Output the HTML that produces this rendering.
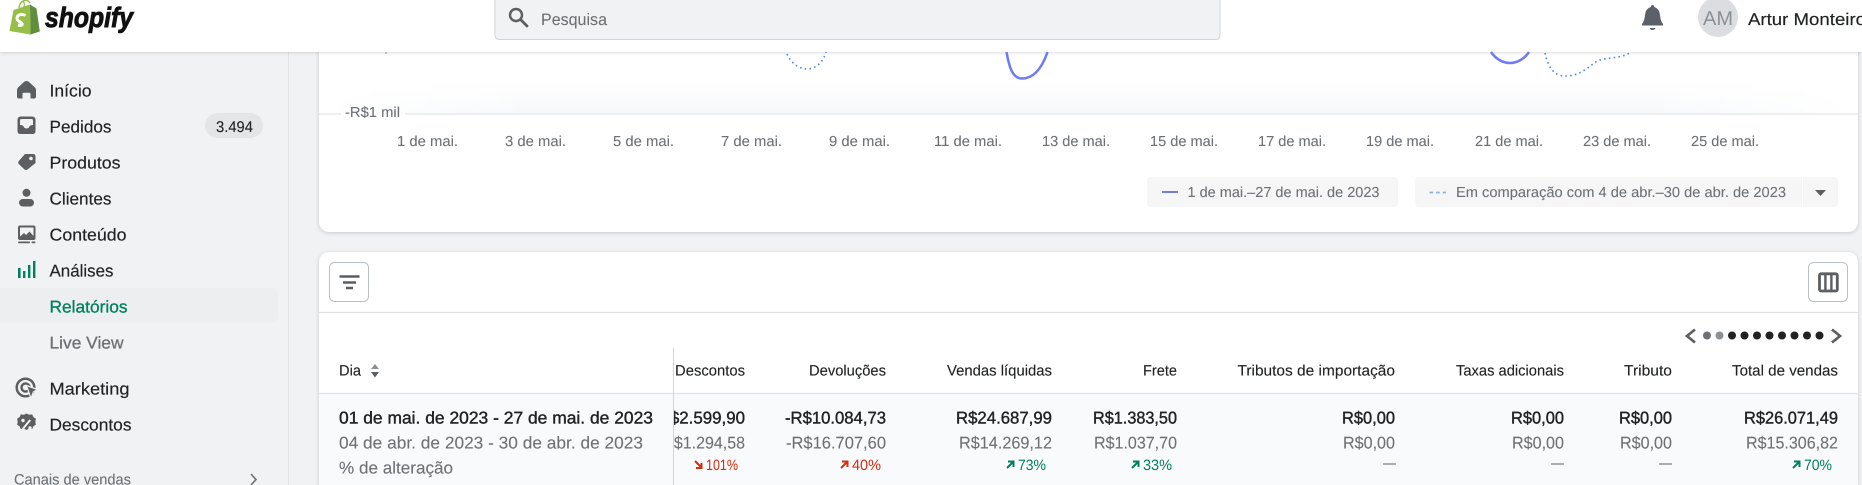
<!DOCTYPE html>
<html lang="pt"><head><meta charset="utf-8"><title>Shopify</title>
<style>
html,body{margin:0;padding:0;width:1862px;height:485px;overflow:hidden;background:#f1f2f4}
#root{position:relative;width:1862px;height:485px;overflow:hidden;background:#f1f2f4}
#top{position:absolute;left:0;top:0;width:1862px;height:52px;background:#fff;box-shadow:0 1px 3px rgba(0,0,0,.14);z-index:3}
#side{position:absolute;left:288px;top:0;width:1px;height:485px;background:#e1e3e5}
.card{position:absolute;left:319px;width:1539px;background:#fff;border-radius:10px;box-shadow:0 1px 4px rgba(23,24,24,.18)}
#c1{top:20px;height:212px}
#c2{top:252px;height:233px;border-radius:10px 10px 0 0}
#grad{position:absolute;left:319px;top:84px;width:1539px;height:30px;background:linear-gradient(#fff,#f6f8fa);-webkit-mask-image:linear-gradient(90deg,transparent,#000 14%,#000 86%,transparent);mask-image:linear-gradient(90deg,transparent,#000 14%,#000 86%,transparent)}
#rowbg{position:absolute;left:319px;top:394px;width:1539px;height:91px;background:#f9fafb}
svg{position:absolute;left:0;top:0;z-index:5;display:block;overflow:hidden}
text{font-family:"Liberation Sans",sans-serif;font-size:17px;fill:#202223;text-rendering:geometricPrecision}
.n{stroke:#202223;stroke-width:.15}
.s{font-size:15px;stroke:#202223;stroke-width:.12}
.g{fill:#6d7175;stroke:#6d7175;stroke-width:.1}
.b{stroke:#202223;stroke-width:.4}
.l{font-size:14.5px;fill:#6d7175;stroke:#6d7175;stroke-width:.1}
.r{font-size:15px;fill:#d72c0d}
.v{font-size:15px;fill:#008060}
</style></head><body>
<div id="root">
<div id="side"></div>
<div id="c1" class="card"></div>
<div id="grad"></div>
<div id="c2" class="card"></div>
<div id="rowbg"></div>
<div id="top"></div>
<svg width="1862" height="485" viewBox="0 0 1862 485" xmlns="http://www.w3.org/2000/svg">
<!-- logo -->
<path d="M19 8 Q20 1 25 0.500 Q28 0 30 3" fill="none" stroke="#95bf47" stroke-width="1.500"/>
<path d="M24 7 Q25 3 23 1" fill="none" stroke="#95bf47" stroke-width="1.200"/>
<path d="M9.500 31 L13.500 10 L30 4.500 L30.500 34.500 Z" fill="#95bf47"/>
<path d="M30 4.500 L33 6.500 L36.500 8.500 L39.800 31.500 L30.500 34.500 Z" fill="#5e8e3e"/>
<path d="M25.500 15.500 Q23 14 20.500 14.500 Q16.800 15.500 17 18.500 Q17.200 20.500 20 22 Q22.500 23.300 22.200 24.500 Q21.500 26 18 25" fill="none" stroke="#fff" stroke-width="3"/>
<text x="45" y="27" textLength="88" lengthAdjust="spacingAndGlyphs" style="font-size:28px;font-weight:bold;font-style:italic;fill:#111;stroke:#111;stroke-width:.9">shopify</text>
<!-- search -->
<path d="M495 -3 H1220 V35 Q1220 39.500 1215.500 39.500 H499.500 Q495 39.500 495 35 Z" fill="#f1f2f4" stroke="#d2d5d8"/>
<circle cx="516" cy="15" r="6" fill="none" stroke="#5c5f62" stroke-width="2.400"/>
<path d="M520.500 19.500 L527 26" stroke="#5c5f62" stroke-width="2.800" stroke-linecap="round"/>
<text x="541" y="25" textLength="66" lengthAdjust="spacingAndGlyphs" class="g" style="font-size:16.500px">Pesquisa</text>
<!-- bell -->
<path d="M1652.500 5 q1.500 0 1.800 2 q5 1.500 5.700 8 q.5 6 3 9 v1.500 h-21 v-1.500 q2.500-3 3-9 q.7-6.500 5.700-8 q.3-2 1.800-2z" fill="#5c6069"/>
<path d="M1649.500 28 h6 q-1 2-3 2 t-3-2z" fill="#5c6069"/>
<!-- avatar -->
<circle cx="1718" cy="17" r="20" fill="#dbdde1"/>
<text x="1703" y="25" textLength="30" lengthAdjust="spacingAndGlyphs" style="font-size:20px;fill:#8c9196">AM</text>
<text x="1748" y="25" textLength="118" lengthAdjust="spacingAndGlyphs" class="n">Artur Monteiro</text>

<!-- nav icons -->
<g fill="#5c5f62">
<path d="M26.500 81 Q28 81 29 82 L35 87.500 Q36 88.500 36 90 V96.500 Q36 98.500 34 98.500 H30.500 V94 Q30.500 92.800 29 92.800 H24 Q22.500 92.800 22.500 94 V98.500 H19 Q17 98.500 17 96.500 V90 Q17 88.500 18 87.500 L24 82 Q25 81 26.500 81 Z"/>
<path d="M21 116.500 H32 Q35.500 116.500 35.500 120 V131 Q35.500 134 32.500 134 H20.500 Q17.500 134 17.500 131 V120 Q17.500 116.500 21 116.500 Z"/>
<path d="M21.500 119 H31.500 Q33 119 33 120.500 V125 Q29.500 125 29 127.500 Q26.500 129.500 24 127.500 Q23.500 125 20 125 V120.500 Q20 119 21.500 119 Z" fill="#f1f2f4"/>
<path d="M25 154 H33 Q35.500 154 35.500 156.500 V163 L27.500 169.500 Q26 170.500 24.500 169.500 L18.800 164 Q17.500 162.500 18.800 161 Z"/>
<circle cx="31" cy="158.500" r="1.800" fill="#f1f2f4"/>
<circle cx="26.500" cy="192.800" r="4"/>
<rect x="19" y="199" width="15" height="7.500" rx="3.700"/>
<rect x="18" y="225.500" width="17.500" height="14.500" rx="2"/>
<path d="M20 227.500 H33.500 V236 L29.500 231.500 L26 235 L24 233 L20 236.500 Z" fill="#f1f2f4"/>
<rect x="18" y="241.500" width="12" height="1.800" rx=".9"/>
<rect x="31.500" y="241.500" width="4" height="1.800" rx=".9"/>
</g>
<g fill="none" stroke="#5c5f62" stroke-width="2.500">
<circle cx="25.500" cy="387.500" r="8.800"/>
<circle cx="25.500" cy="387.500" r="4"/>
</g>
<path d="M26.500 385.500 L37.500 389.500 L33.300 392 L31 398.500 Z" fill="#5c5f62" stroke="#f1f2f4" stroke-width="1.200"/>
<path d="M26.500 413.500 l2.700 1.200 3 -.3 1.200 2.700 2.500 1.700 -.6 2.900 .6 2.900 -2.500 1.700 -1.200 2.700 -3 -.3 -2.700 1.200 -2.700 -1.200 -3 .3 -1.200 -2.700 -2.500 -1.700 .6 -2.900 -.6 -2.900 2.500 -1.700 1.200 -2.700 3 .3 z" fill="#5c5f62"/>
<path d="M22.800 429 L30.200 420" stroke="#f1f2f4" stroke-width="2"/>
<circle cx="23" cy="420.500" r="1.700" fill="#f1f2f4"/><circle cx="30" cy="428" r="1.700" fill="#f1f2f4"/>
<g fill="#008060">
<rect x="18" y="268" width="2.600" height="10"/><rect x="23" y="271" width="2.400" height="7"/>
<rect x="28" y="265" width="2.400" height="13"/><rect x="33" y="261" width="2.400" height="17"/>
</g>
<!-- nav -->
<text x="49.500" y="96.500" textLength="42" lengthAdjust="spacingAndGlyphs" class="n">Início</text>
<text x="49.500" y="132.300" textLength="62" lengthAdjust="spacingAndGlyphs" class="n">Pedidos</text>
<rect x="205" y="113" width="58" height="25" rx="12.500" fill="#e4e5e7"/>
<text x="216" y="132" textLength="37" lengthAdjust="spacingAndGlyphs" style="font-size:15.500px;stroke:#202223;stroke-width:.1">3.494</text>
<text x="49.500" y="168.300" textLength="71" lengthAdjust="spacingAndGlyphs" class="n">Produtos</text>
<text x="49.500" y="204.300" textLength="62" lengthAdjust="spacingAndGlyphs" class="n">Clientes</text>
<text x="49.500" y="240.300" textLength="77" lengthAdjust="spacingAndGlyphs" class="n">Conteúdo</text>
<text x="49.500" y="276.300" textLength="64" lengthAdjust="spacingAndGlyphs" class="n">Análises</text>
<path d="M0 288 H273 Q278 288 278 293 V317.500 Q278 322.500 273 322.500 H0 Z" fill="#edeef0"/>
<text x="49.500" y="312.300" textLength="78" lengthAdjust="spacingAndGlyphs" style="fill:#008060;stroke:#008060;stroke-width:.3">Relatórios</text>
<text x="49.500" y="348.300" textLength="74" lengthAdjust="spacingAndGlyphs" style="fill:#6d7175;stroke:#6d7175;stroke-width:.3">Live View</text>
<text x="49.500" y="394.300" textLength="80" lengthAdjust="spacingAndGlyphs" class="n">Marketing</text>
<text x="49.500" y="430.300" textLength="82" lengthAdjust="spacingAndGlyphs" class="n">Descontos</text>
<text x="14" y="484.500" textLength="117" lengthAdjust="spacingAndGlyphs" class="g" style="font-size:15px">Canais de vendas</text>
<path d="M251 474 L256 479.500 L251 485" fill="none" stroke="#6d7175" stroke-width="1.600"/>

<!-- chart -->
<path d="M319 114 H341 M405 114 H1858" stroke="#e4e5e7" stroke-width="1.200"/>
<text x="345" y="117" textLength="55" lengthAdjust="spacingAndGlyphs" class="l">-R$1 mil</text>
<path d="M386 52 V54" stroke="#a08080" stroke-width="1"/>
<path d="M787 54 C791 63 799 69 807 69 C815 69 823 63 826 52" fill="none" stroke="#5e8bd0" stroke-width="1.700" stroke-dasharray="1.600 3.200"/>
<path d="M1006.500 52 C1009 66 1012 78.500 1022 78.500 C1034 78.500 1042 68 1047.500 52" fill="none" stroke="#6f7bf5" stroke-width="2.500"/>
<path d="M1491 52 C1495 58 1502 63 1510 63 C1518 63 1525 58 1529 52" fill="none" stroke="#6f7bf5" stroke-width="2.500"/>
<path d="M1545 53 C1548 66 1553 76 1565 76 C1578 76 1585 70 1597 61 C1606 57 1622 59 1631 52" fill="none" stroke="#5e8bd0" stroke-width="1.700" stroke-dasharray="1.600 3.200"/>
<g>
<text x="397" y="146" textLength="61" lengthAdjust="spacingAndGlyphs" class="l">1 de mai.</text>
<text x="505" y="146" textLength="61" lengthAdjust="spacingAndGlyphs" class="l">3 de mai.</text>
<text x="613" y="146" textLength="61" lengthAdjust="spacingAndGlyphs" class="l">5 de mai.</text>
<text x="721" y="146" textLength="61" lengthAdjust="spacingAndGlyphs" class="l">7 de mai.</text>
<text x="829" y="146" textLength="61" lengthAdjust="spacingAndGlyphs" class="l">9 de mai.</text>
<text x="934" y="146" textLength="68" lengthAdjust="spacingAndGlyphs" class="l">11 de mai.</text>
<text x="1042" y="146" textLength="68" lengthAdjust="spacingAndGlyphs" class="l">13 de mai.</text>
<text x="1150" y="146" textLength="68" lengthAdjust="spacingAndGlyphs" class="l">15 de mai.</text>
<text x="1258" y="146" textLength="68" lengthAdjust="spacingAndGlyphs" class="l">17 de mai.</text>
<text x="1366" y="146" textLength="68" lengthAdjust="spacingAndGlyphs" class="l">19 de mai.</text>
<text x="1475" y="146" textLength="68" lengthAdjust="spacingAndGlyphs" class="l">21 de mai.</text>
<text x="1583" y="146" textLength="68" lengthAdjust="spacingAndGlyphs" class="l">23 de mai.</text>
<text x="1691" y="146" textLength="68" lengthAdjust="spacingAndGlyphs" class="l">25 de mai.</text>
</g>
<!-- legend -->
<rect x="1147" y="177" width="251" height="30" rx="4" fill="#f6f6f7"/>
<path d="M1162 192 H1178" stroke="#5c6ac4" stroke-width="1.700"/>
<text x="1187.500" y="197" textLength="192" lengthAdjust="spacingAndGlyphs" class="l">1 de mai.–27 de mai. de 2023</text>
<path d="M1415 181 Q1415 177 1419 177 H1802 V207 H1419 Q1415 207 1415 203 Z" fill="#f6f6f7"/>
<path d="M1429.500 192.500 H1446" stroke="#8fb0dc" stroke-width="1.700" stroke-dasharray="3.600 3"/>
<text x="1456" y="197" textLength="330" lengthAdjust="spacingAndGlyphs" class="l">Em comparação com 4 de abr.–30 de abr. de 2023</text>
<path d="M1803 177 H1834 Q1838 177 1838 181 V203 Q1838 207 1834 207 H1803 Z" fill="#f6f6f7"/>
<path d="M1815 190 H1826 L1820.500 196 Z" fill="#5c5f62"/>

<!-- table toolbar -->
<rect x="329.500" y="262.500" width="39" height="39" rx="5" fill="#fff" stroke="#babfc3"/>
<path d="M339.500 276.500 H359.500 M343 282.500 H356 M346 288 H353" stroke="#5c5f62" stroke-width="2.500"/>
<rect x="1808.500" y="262.500" width="39" height="39" rx="5" fill="#fff" stroke="#babfc3"/>
<rect x="1819.500" y="273.800" width="17.800" height="17.200" rx="1.500" fill="none" stroke="#5c5f62" stroke-width="2.800"/>
<path d="M1825.400 273 V292 M1831.400 273 V292" stroke="#5c5f62" stroke-width="2.400"/>
<path d="M319 312.500 H1858 M319 393.500 H1858" stroke="#e1e3e5" stroke-width="1.200"/>
<path d="M673.500 348 V485" stroke="#d2d5d8"/>
<!-- pager -->
<path d="M1695 329.500 L1687 336 L1695 342.500" fill="none" stroke="#5c5f62" stroke-width="2.700"/>
<path d="M1832 329.500 L1840 336 L1832 342.500" fill="none" stroke="#5c5f62" stroke-width="2.700"/>
<circle cx="1707" cy="335.500" r="4" fill="#6d7175"/><circle cx="1719.500" cy="335.500" r="4" fill="#8c9196"/>
<g fill="#202223">
<circle cx="1732" cy="335.500" r="4"/><circle cx="1744.500" cy="335.500" r="4"/><circle cx="1757" cy="335.500" r="4"/><circle cx="1769.500" cy="335.500" r="4"/><circle cx="1782" cy="335.500" r="4"/><circle cx="1794.500" cy="335.500" r="4"/><circle cx="1807" cy="335.500" r="4"/><circle cx="1819.500" cy="335.500" r="4"/>
</g>
<!-- headers -->
<text x="339" y="375.300" textLength="22" lengthAdjust="spacingAndGlyphs" class="s">Dia</text>
<path d="M375 364 L379 369 H371 Z" fill="#8c9196"/><path d="M371 372 H379 L375 377.500 Z" fill="#5c5f62"/>
<text x="675" y="375.300" textLength="70" lengthAdjust="spacingAndGlyphs" class="s">Descontos</text>
<text x="809" y="375.300" textLength="77" lengthAdjust="spacingAndGlyphs" class="s">Devoluções</text>
<text x="947" y="375.300" textLength="105" lengthAdjust="spacingAndGlyphs" class="s">Vendas líquidas</text>
<text x="1143" y="375.300" textLength="34" lengthAdjust="spacingAndGlyphs" class="s">Frete</text>
<text x="1237.500" y="375.300" textLength="157.500" lengthAdjust="spacingAndGlyphs" class="s">Tributos de importação</text>
<text x="1456" y="375.300" textLength="108" lengthAdjust="spacingAndGlyphs" class="s">Taxas adicionais</text>
<text x="1624" y="375.300" textLength="48" lengthAdjust="spacingAndGlyphs" class="s">Tributo</text>
<text x="1732" y="375.300" textLength="106" lengthAdjust="spacingAndGlyphs" class="s">Total de vendas</text>
<!-- row -->
<text x="339" y="423.300" textLength="314" lengthAdjust="spacingAndGlyphs" class="b">01 de mai. de 2023 - 27 de mai. de 2023</text>
<text x="339" y="448.300" textLength="304" lengthAdjust="spacingAndGlyphs" class="g">04 de abr. de 2023 - 30 de abr. de 2023</text>
<text x="339" y="473.300" textLength="114" lengthAdjust="spacingAndGlyphs" class="g">% de alteração</text>
<clipPath id="cl"><rect x="674" y="394" width="90" height="91"/></clipPath>
<g clip-path="url(#cl)">
<text x="652" y="423.300" textLength="93" lengthAdjust="spacingAndGlyphs" class="b">-R$2.599,90</text>
<text x="657" y="448.300" textLength="88" lengthAdjust="spacingAndGlyphs" class="g">-R$1.294,58</text>
</g>
<text x="785" y="423.300" textLength="101" lengthAdjust="spacingAndGlyphs" class="b">-R$10.084,73</text>
<text x="786" y="448.300" textLength="100" lengthAdjust="spacingAndGlyphs" class="g">-R$16.707,60</text>
<text x="956" y="423.300" textLength="96" lengthAdjust="spacingAndGlyphs" class="b">R$24.687,99</text>
<text x="959" y="448.300" textLength="93" lengthAdjust="spacingAndGlyphs" class="g">R$14.269,12</text>
<text x="1093" y="423.300" textLength="84" lengthAdjust="spacingAndGlyphs" class="b">R$1.383,50</text>
<text x="1094" y="448.300" textLength="83" lengthAdjust="spacingAndGlyphs" class="g">R$1.037,70</text>
<text x="1342" y="423.300" textLength="53" lengthAdjust="spacingAndGlyphs" class="b">R$0,00</text>
<text x="1343" y="448.300" textLength="52" lengthAdjust="spacingAndGlyphs" class="g">R$0,00</text>
<text x="1511" y="423.300" textLength="53" lengthAdjust="spacingAndGlyphs" class="b">R$0,00</text>
<text x="1512" y="448.300" textLength="52" lengthAdjust="spacingAndGlyphs" class="g">R$0,00</text>
<text x="1619" y="423.300" textLength="53" lengthAdjust="spacingAndGlyphs" class="b">R$0,00</text>
<text x="1620" y="448.300" textLength="52" lengthAdjust="spacingAndGlyphs" class="g">R$0,00</text>
<text x="1744" y="423.300" textLength="94" lengthAdjust="spacingAndGlyphs" class="b">R$26.071,49</text>
<text x="1746" y="448.300" textLength="92" lengthAdjust="spacingAndGlyphs" class="g">R$15.306,82</text>
<!-- pct -->
<path d="M695 461 L701 467 M701.500 463 V468 H696" fill="none" stroke="#d72c0d" stroke-width="2"/>
<text x="706" y="470" textLength="32" lengthAdjust="spacingAndGlyphs" class="r">101%</text>
<path d="M841 468 L847 462 M842 461.500 H847.500 V467" fill="none" stroke="#d72c0d" stroke-width="2"/>
<text x="852" y="470" textLength="29" lengthAdjust="spacingAndGlyphs" class="r">40%</text>
<path d="M1007 468 L1013 462 M1008 461.500 H1013.500 V467" fill="none" stroke="#008060" stroke-width="2"/>
<text x="1018" y="470" textLength="28" lengthAdjust="spacingAndGlyphs" class="v">73%</text>
<path d="M1132 468 L1138 462 M1133 461.500 H1138.500 V467" fill="none" stroke="#008060" stroke-width="2"/>
<text x="1143" y="470" textLength="29" lengthAdjust="spacingAndGlyphs" class="v">33%</text>
<path d="M1793 468 L1799 462 M1794 461.500 H1799.500 V467" fill="none" stroke="#008060" stroke-width="2"/>
<text x="1804" y="470" textLength="28" lengthAdjust="spacingAndGlyphs" class="v">70%</text>
<path d="M1383 464 H1396 M1551 464 H1564 M1659 464 H1672" stroke="#8c9196" stroke-width="1.400"/>
</svg>
</div>
</body></html>
